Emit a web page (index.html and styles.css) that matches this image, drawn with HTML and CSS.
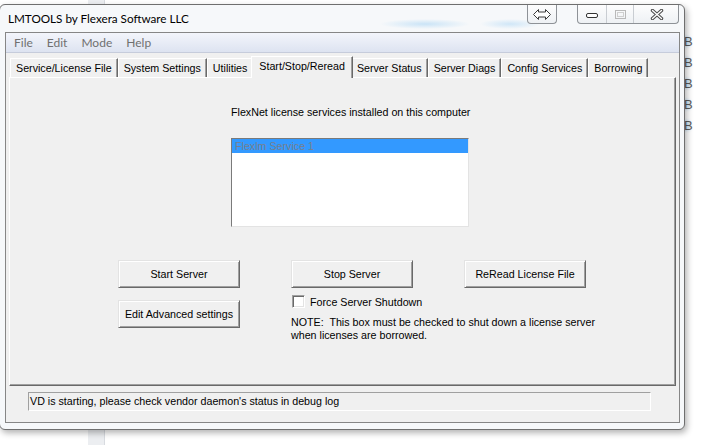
FILE: index.html
```html
<!DOCTYPE html>
<html lang="en">
<head>
    <meta charset="UTF-8">
    <title>LMTOOLS by Flexera Software LLC</title>
    <link rel="stylesheet" href="styles.css">
</head>
<body>
    <div class="desktop">
        <div class="desk-strip"></div>
        <div class="desk-icons">
            <span>B</span><span>B</span><span>B</span><span>B</span><span>B</span>
        </div>

        <div class="window">
            <div class="titlebar">
                <span class="title">LMTOOLS by Flexera Software LLC</span>
                <div class="cap-btn swap">
                    <svg width="18" height="11" viewBox="0 0 18 11">
                        <path d="M0.5 5.5 L5.5 0.5 V3 H12.5 V0.5 L17.5 5.5 L12.5 10.5 V8 H5.5 V10.5 Z" fill="#fff" stroke="#3c3c3c" stroke-width="1" stroke-linejoin="round"/>
                    </svg>
                </div>
                <div class="cap-btn cap-group">
                    <div class="cap min">
                        <svg width="12" height="5" viewBox="0 0 12 5">
                            <rect x="0.5" y="0.5" width="11" height="4" rx="1.5" fill="#fff" stroke="#333"/>
                        </svg>
                    </div>
                    <div class="cap max">
                        <svg width="11" height="9" viewBox="0 0 11 9">
                            <rect x="0.5" y="0.5" width="10" height="8" fill="none" stroke="#b9b9b9"/>
                            <rect x="2.5" y="2.5" width="6" height="4" fill="none" stroke="#cfcfcf"/>
                        </svg>
                    </div>
                    <div class="cap close">
                        <svg width="14" height="11" viewBox="0 0 14 11">
                            <path d="M2.5 1.5 L11.5 9.5 M11.5 1.5 L2.5 9.5" stroke="#4a4a4a" stroke-width="3.4" stroke-linecap="round"/>
                            <path d="M2.5 1.5 L11.5 9.5 M11.5 1.5 L2.5 9.5" stroke="#fff" stroke-width="1.4" stroke-linecap="round"/>
                        </svg>
                    </div>
                </div>
            </div>

            <div class="client">
                <div class="menubar">
                    <span class="menu-item">File</span>
                    <span class="menu-item">Edit</span>
                    <span class="menu-item">Mode</span>
                    <span class="menu-item">Help</span>
                </div>

                <div class="tabs">
                    <div class="tab">Service/License File</div>
                    <div class="tab">System Settings</div>
                    <div class="tab">Utilities</div>
                    <div class="tab active">Start/Stop/Reread</div>
                    <div class="tab">Server Status</div>
                    <div class="tab">Server Diags</div>
                    <div class="tab">Config Services</div>
                    <div class="tab">Borrowing</div>
                </div>

                <div class="panel">
                    <div class="services">
                        <p class="services-title">FlexNet license services installed on this computer</p>
                        <div class="listbox">
                            <div class="list-item selected">Flexlm Service 1</div>
                        </div>
                    </div>

                    <div class="actions">
                        <button class="btn">Start Server</button>
                        <button class="btn">Stop Server</button>
                        <button class="btn">ReRead License File</button>
                        <button class="btn edit-btn">Edit Advanced settings</button>
                        <div class="options">
                            <label class="check-row">
                                <span class="checkbox"></span>
                                <span>Force Server Shutdown</span>
                            </label>
                            <p class="note">NOTE:&nbsp; This box must be checked to shut down a license server<br>when licenses are borrowed.</p>
                        </div>
                    </div>
                </div>

                <div class="statusbar">
                    <div class="status-box">VD is starting, please check vendor daemon's status in debug log</div>
                </div>
            </div>
        </div>
    </div>
</body>
</html>
```

FILE: styles.css
```css
:root {
    --face: #f0f0f0;
    --light: #e3e3e3;
    --shadow: #a0a0a0;
    --dark-shadow: #696969;
    --select: #3399ff;
}

* {
    margin: 0;
    padding: 0;
    box-sizing: border-box;
}

body {
    background-color: #fff;
    font-family: "Liberation Sans", Arial, sans-serif;
    font-size: 10.7px;
    color: #000;
    overflow: hidden;
}

.desktop {
    position: relative;
    width: 704px;
    height: 445px;
    padding-top: 4px;
}

/* things on the desktop behind the window */
.desk-strip {
    position: absolute;
    left: 88px;
    top: 0;
    width: 17px;
    height: 445px;
    background-color: #eceef1;
    border-right: 1px solid #d8dbe0;
}

.desk-icons {
    position: absolute;
    left: 684px;
    top: 31px;
    display: flex;
    flex-direction: column;
    font-size: 13px;
    line-height: 21px;
    color: #5a5a5a;
}

.desk-icons span {
    text-shadow: -2px 0 3px rgba(90, 170, 235, 0.7);
}

/* window frame */
.window {
    position: relative;
    z-index: 1;
    margin-left: -1px;
    width: 686px;
    height: 426px;
    border: 1px solid #6f6f6f;
    border-radius: 6px;
    background-color: #f6f8fa;
    box-shadow: 2px 3px 6px rgba(0, 0, 0, 0.3);
    padding: 0 4px 6px 5px;
}

.titlebar {
    height: 27px;
    display: flex;
    align-items: flex-start;
    background:
        radial-gradient(ellipse 45px 5px at 420px 19px, rgba(120, 190, 240, 0.35), transparent),
        radial-gradient(ellipse 30px 5px at 505px 19px, rgba(120, 190, 240, 0.3), transparent);
}

.title {
    margin-left: 3px;
    line-height: 27px;
    font-family: Lato, "Liberation Sans", sans-serif;
    font-size: 11.7px;
    color: #000;
    flex: 1;
}

.cap-btn {
    height: 19px;
    border: 1px solid #8e9297;
    border-top: none;
    border-radius: 0 0 4px 4px;
    background: linear-gradient(#fdfdfd, #eef1f4);
    display: flex;
}

.swap {
    width: 30px;
    align-items: center;
    justify-content: center;
    margin-right: 20px;
}

.cap-group {
    width: 102px;
    margin-right: 1px;
}

.cap {
    display: flex;
    justify-content: center;
    align-items: center;
}

.cap + .cap {
    border-left: 1px solid #c9cdd2;
}

.min {
    width: 28px;
    padding-top: 3px;
}

.max {
    width: 27px;
}

.close {
    flex: 1;
    padding-left: 2px;
}

/* client area */
.client {
    height: 391px;
    border: 1px solid #868686;
    background-color: var(--face);
}

.menubar {
    height: 20px;
    display: flex;
    align-items: center;
    background: linear-gradient(#f3f5fb, #dde3f1);
    border-bottom: 1px solid #c6ccdb;
    font-family: Lato, "Liberation Sans", sans-serif;
    font-size: 12px;
    color: #707070;
}

.menu-item {
    padding: 0 6px 0 8px;
}

.tabs {
    height: 24px;
    display: flex;
    align-items: flex-end;
    padding-left: 4px;
}

.tab {
    height: 19px;
    padding: 0 5px;
    line-height: 18px;
    white-space: nowrap;
    border-top: 1px solid #fff;
    border-left: 1px solid #fff;
    border-right: 1px solid var(--dark-shadow);
    box-shadow: inset -1px 0 var(--shadow);
    background-color: var(--face);
}

.tab.active {
    position: relative;
    z-index: 1;
    height: 22px;
    margin: 0 -2px -1px;
    padding: 0 7px;
    line-height: 19px;
}

.panel {
    height: 309px;
    margin: 0 3px;
    border-top: 1px solid #fff;
    border-left: 1px solid #fff;
    border-right: 1px solid var(--dark-shadow);
    border-bottom: 1px solid var(--dark-shadow);
    box-shadow: inset -1px -1px var(--shadow);
}

.services {
    width: 238px;
    margin-left: 221px;
    padding-top: 28px;
}

.services-title {
    line-height: 13px;
    white-space: nowrap;
}

.listbox {
    margin-top: 19px;
    height: 89px;
    background-color: #fff;
    border: 1px solid;
    border-color: #7a7a7a #e3e3e3 #e3e3e3 #7a7a7a;
}

.list-item {
    height: 14px;
    line-height: 14px;
    padding-left: 3px;
}

.list-item.selected {
    background-color: var(--select);
    color: #77808e;
}

.actions {
    display: grid;
    grid-template-columns: 122px 122px 122px;
    column-gap: 51px;
    align-items: start;
    margin: 33px 0 0 108px;
}

.btn {
    height: 28px;
    font: inherit;
    color: #000;
    text-align: center;
    background-color: var(--face);
    border: 1px solid;
    border-color: var(--light) var(--dark-shadow) var(--dark-shadow) var(--light);
    box-shadow: inset 1px 1px #fff, inset -1px -1px var(--shadow);
}

.edit-btn {
    margin-top: 12px;
}

.options {
    grid-column: 2 / 4;
    margin-top: 7px;
}

.check-row {
    display: flex;
    align-items: center;
    height: 13px;
    white-space: nowrap;
}

.checkbox {
    width: 13px;
    height: 13px;
    margin: 0 5px 0 1px;
    background-color: #fff;
    border: 1px solid;
    border-color: var(--shadow) #fff #fff var(--shadow);
    box-shadow: inset 1px 1px var(--dark-shadow), inset -1px -1px var(--light);
}

.note {
    margin-top: 8px;
    line-height: 13px;
    white-space: nowrap;
}

.statusbar {
    padding: 6px 0 0 22px;
}

.status-box {
    width: 623px;
    height: 19px;
    padding-left: 1px;
    line-height: 17px;
    white-space: nowrap;
    border: 1px solid;
    border-color: var(--shadow) #fff #fff var(--shadow);
}
```
